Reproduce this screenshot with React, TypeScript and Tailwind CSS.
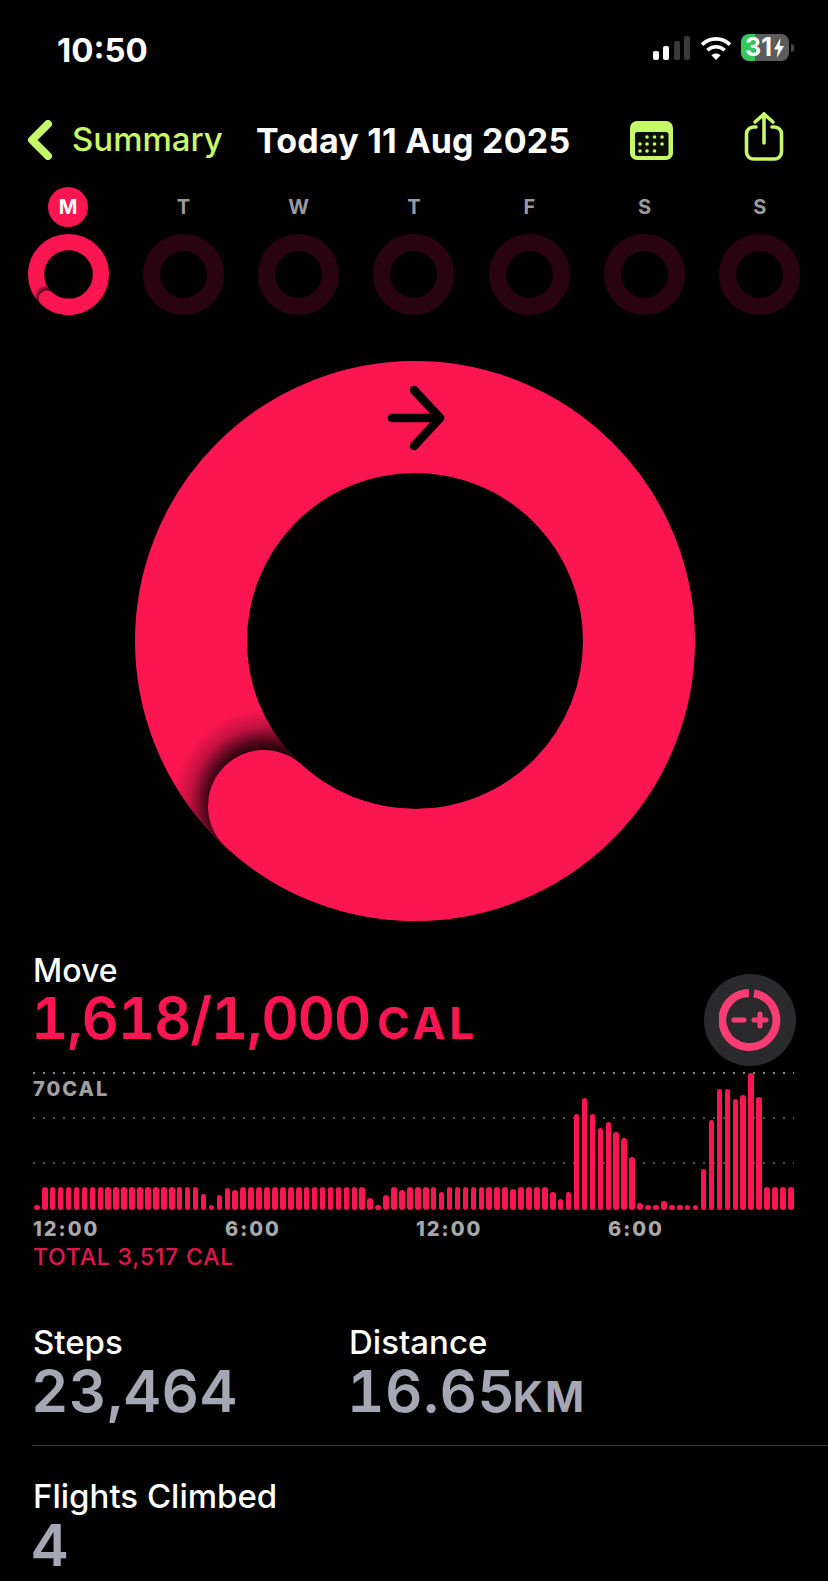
import React from 'react';

const bars = [
  5, 23, 23, 23, 23, 23, 23, 23, 23, 23, 23, 23, 23, 23, 23, 23, 23, 23, 23, 23, 23, 16, 5, 15,
  22, 20, 23, 23, 23, 23, 23, 23, 23, 23, 23, 23, 23, 23, 23, 23, 23, 23, 12, 5, 15, 23, 20, 23,
  23, 23, 23, 18, 23, 23, 23, 23, 23, 23, 23, 23, 21, 23, 23, 23, 23, 18, 11, 18, 96, 112, 96, 82,
  88, 78, 72, 53, 7, 5, 5, 9, 5, 5, 5, 5, 41, 90, 121, 121, 111, 115, 137, 113, 23, 23, 23, 23,
];

const days = ['M', 'T', 'W', 'T', 'F', 'S', 'S'];
const gridLines = ['top-0', 'top-[45px]', 'top-[90px]'];
const axisLabels = ['12:00', '6:00', '12:00', '6:00'];

// Same drawing for the big ring and the week rings, only scaled down
function ActivityRing({ active, arrow, className }: { active: boolean; arrow?: boolean; className: string }) {
  if (!active) {
    return (
      <svg viewBox="0 0 560 560" className={className}>
        <circle cx="280" cy="280" r="221" fill="none" stroke="#290310" strokeWidth="118" />
      </svg>
    );
  }
  return (
    <svg viewBox="0 0 560 560" className={className}>
      <defs>
        <radialGradient id="capShadow" gradientUnits="userSpaceOnUse" cx="132" cy="442" r="94">
          <stop offset="0.53" stopColor="#000" stopOpacity="0.95" />
          <stop offset="0.66" stopColor="#000" stopOpacity="0.66" />
          <stop offset="0.82" stopColor="#000" stopOpacity="0.22" />
          <stop offset="1" stopColor="#000" stopOpacity="0" />
        </radialGradient>
      </defs>
      <circle cx="280" cy="280" r="224" fill="none" stroke="#fb1652" strokeWidth="112" />
      <circle cx="280" cy="280" r="224" fill="none" stroke="url(#capShadow)" strokeWidth="112" />
      <path d="M129 445 A224 224 0 0 0 300 503" fill="none" stroke="#fb1652" strokeWidth="112" strokeLinecap="round" />
      {arrow && (
        <path d="M257 57H304M279 29L305 57L279 85" fill="none" stroke="#000" strokeWidth="8.5" strokeLinecap="round" strokeLinejoin="round" />
      )}
    </svg>
  );
}

function StatusIcons() {
  return (
    <div className="flex items-center">
      <div className="flex items-end gap-[4.3px] h-[24px]">
        <div className="w-[6px] h-[9px] rounded-[2px] bg-white" />
        <div className="w-[6px] h-[14px] rounded-[2px] bg-white" />
        <div className="w-[6px] h-[19px] rounded-[2px] bg-[#3a3a3a]" />
        <div className="w-[6px] h-[24px] rounded-[2px] bg-[#3a3a3a]" />
      </div>
      <svg viewBox="0 0 32 24" className="w-[32px] h-[24px] ml-[10px]" fill="none" stroke="#fff" strokeWidth="3.6" strokeLinecap="butt">
        <path d="M2 8.6C10 1 22 1 30 8.6" />
        <path d="M7.4 14.2C12.4 9.6 19.6 9.6 24.6 14.2" />
        <path d="M16 24 L11.4 19.2 C14 16.8 18 16.8 20.6 19.2 Z" fill="#fff" stroke="none" />
      </svg>
      <div className="ml-[9px] w-[48px] h-[27px] rounded-[8px] bg-[linear-gradient(90deg,#34c759_30%,#5c5c5c_30%)] flex items-center justify-center gap-[1px] text-white text-[25px] font-bold leading-none">
        <span>31</span>
        <svg viewBox="0 0 12 20" className="w-[12px] h-[20px]" fill="#fff">
          <path d="M7.5 0 L1 11.5 H5 L3.8 20 L11 8 H6.8 Z" />
        </svg>
      </div>
      <div className="ml-[2px] w-[3px] h-[8px] rounded-r-[3px] bg-[#4a4a4a]" />
    </div>
  );
}

function CalendarIcon() {
  const dots = [
    [17, 16], [24.5, 16], [32, 16],
    [10, 23], [17, 23], [24.5, 23], [32, 23],
    [10, 30], [17, 30], [24.5, 30],
  ];
  return (
    <svg viewBox="0 0 43 39" className="w-[43px] h-[39px]">
      <rect width="43" height="39" rx="7" fill="#c5f969" />
      <rect x="5" y="11" width="33.5" height="24" rx="2.5" fill="#0a0f02" />
      {dots.map(([x, y]) => (
        <circle key={`${x}-${y}`} cx={x} cy={y} r="1.8" fill="#c5f969" />
      ))}
    </svg>
  );
}

function ShareIcon() {
  return (
    <svg viewBox="0 0 40 50" className="w-[40px] h-[50px]" fill="none" stroke="#c5f969" strokeWidth="3.6" strokeLinecap="round" strokeLinejoin="round">
      <path d="M12 15H9.5A7 7 0 0 0 2.5 22V40A7 7 0 0 0 9.5 47H30.5A7 7 0 0 0 37.5 40V22A7 7 0 0 0 30.5 15H28" />
      <path d="M20 31V2" />
      <path d="M11 10L20 2L29 10" />
    </svg>
  );
}

function AdjustButton() {
  return (
    <div className="w-[92px] h-[92px] rounded-full bg-[#2a2a2c] flex items-center justify-center">
      <svg viewBox="0 0 62 62" className="w-[62px] h-[62px]" fill="none" stroke="#fb3d73" strokeLinecap="round">
        <path d="M30 4A27 27 0 1 0 35 4.4" strokeWidth="8" strokeLinecap="butt" />
        <path d="M15 31H25" strokeWidth="5" />
        <path d="M35 31H47M41 25V37" strokeWidth="5" />
      </svg>
    </div>
  );
}

function Stat({ label, value, unit }: { label: string; value: string; unit?: string }) {
  return (
    <div>
      <div className="text-[33px] font-medium leading-[36px] text-white">{label}</div>
      <div className="-ml-[2px] text-[58px] font-semibold leading-[62px] text-[#a5a8b4] tabular-nums tracking-[0.6px]">
        {value}
        {unit && <span className="-ml-[3px] text-[42px] font-bold tracking-[2px]">{unit}</span>}
      </div>
    </div>
  );
}

export default function App() {
  return (
    <div className="w-[828px] h-[1581px] bg-black overflow-hidden text-white [font-family:Inter,sans-serif]">
      {/* status bar */}
      <div className="h-[100px] pl-[57px] pr-[34px] pt-[34px] flex justify-between items-start">
        <span className="text-[33px] font-bold leading-[32px]">10:50</span>
        <StatusIcons />
      </div>

      {/* nav */}
      <div className="h-[60px] mt-[10px] flex items-center pl-[27px]">
        <svg viewBox="0 0 26 40" className="w-[26px] h-[40px]" fill="none" stroke="#c5f969" strokeWidth="8" strokeLinecap="round" strokeLinejoin="round">
          <path d="M21 4L5 20L21 36" />
        </svg>
        <span className="ml-[19px] w-[184px] text-[33px] font-medium text-[#c5f969]">Summary</span>
        <span className="w-[374px] text-[34px] font-bold tracking-[0.2px]">Today 11 Aug 2025</span>
        <CalendarIcon />
        <div className="ml-[71px] -mt-[6px]"><ShareIcon /></div>
      </div>

      {/* week */}
      <div className="mt-[17px] px-[10.5px] grid grid-cols-7">
        {days.map((d, i) => (
          <div key={i} className="flex flex-col items-center">
            <div className={`w-[40px] h-[40px] rounded-full flex items-center justify-center text-[20px] font-bold ${i === 0 ? 'bg-[#fb1652] text-white' : 'text-[#9a9a9e]'}`}>
              {d}
            </div>
            <ActivityRing active={i === 0} className="w-[81px] h-[81px] mt-[7px]" />
          </div>
        ))}
      </div>

      {/* big ring */}
      <div className="mt-[46px] pl-[2px] flex justify-center">
        <ActivityRing active arrow className="w-[560px] h-[560px]" />
      </div>

      {/* move */}
      <div className="mt-[33px] pl-[33px] pr-[32px] flex justify-between items-start">
        <div>
          <div className="text-[32px] font-medium leading-[33px]">Move</div>
          <div className="-ml-[2px] text-[58px] font-semibold leading-[62px] text-[#fb1652] tabular-nums tracking-[-1.3px]">
            1,618/1,000<span className="ml-[7px] text-[44px] font-bold tracking-[4px]">CAL</span>
          </div>
        </div>
        <div className="mt-[20px]"><AdjustButton /></div>
      </div>

      {/* chart */}
      <div className="mt-[6px] ml-[33px] w-[761px] h-[138px] relative">
        {gridLines.map((top, i) => (
          <div
            key={top}
            className={`absolute left-0 right-0 h-[2px] bg-[radial-gradient(circle,#8a8a8a_1px,transparent_1px)] bg-[length:10px_2px] bg-[position:-4px_0] ${top} ${i === 0 ? '' : 'opacity-60'}`}
          />
        ))}
        <div className="absolute left-0 top-[5px] text-[20px] font-extrabold leading-[24px] text-[#a0a0a2] tracking-[2px]">70CAL</div>
        <div className="absolute inset-0 flex items-end justify-between pl-[1px]">
          {bars.map((h, i) => (
            <div key={i} className="w-[5.6px] rounded-full bg-[#fb1652]" style={{ height: h }} />
          ))}
        </div>
      </div>

      <div className="ml-[33px] mt-[7px] grid grid-cols-[192px_191px_192px_100px] text-[20px] font-extrabold leading-[24px] text-[#a8a8aa] tracking-[2px]">
        {axisLabels.map((t, i) => (
          <span key={i}>{t}</span>
        ))}
      </div>
      <div className="ml-[33px] mt-[2px] text-[23px] font-medium leading-[28px] text-[#e0174f] tracking-[0.8px]">TOTAL 3,517 CAL</div>

      {/* stats */}
      <div className="mt-[53px] ml-[33px] flex">
        <div className="w-[316px]"><Stat label="Steps" value="23,464" /></div>
        <Stat label="Distance" value="16.65" unit="KM" />
      </div>
      <div className="mt-[17px] ml-[32px] h-[1px] bg-[#3a3a3c]" />
      <div className="mt-[32px] ml-[33px]">
        <Stat label="Flights Climbed" value="4" />
      </div>
    </div>
  );
}
